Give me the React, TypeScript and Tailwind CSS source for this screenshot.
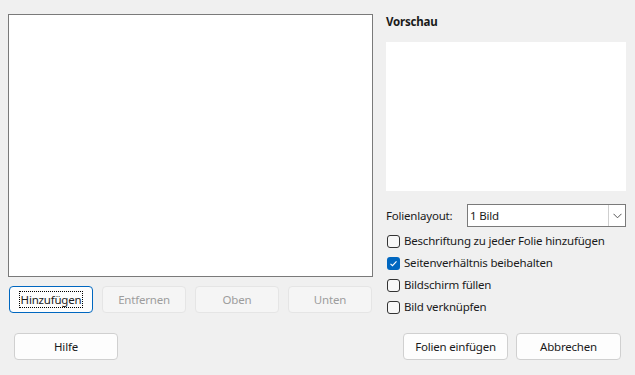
import React from "react";

const font = { fontFamily: '"Noto Sans", "Open Sans", sans-serif' };

function Btn({
  label,
  disabled,
  focused,
  className = "",
}: {
  label: string;
  disabled?: boolean;
  focused?: boolean;
  className?: string;
}) {
  return (
    <button
      className={`h-[27px] rounded-[4px] border text-[11.5px] tracking-[-0.2px] flex items-center justify-center ${
        focused
          ? "border-[#0067c0] bg-[#fdfdfd] text-[#1a1a1a]"
          : disabled
          ? "border-[#e5e5e5] bg-[#f5f5f5] text-[#9d9d9d]"
          : "border-[#d0d0d0] bg-[#fdfdfd] text-[#1a1a1a]"
      } ${className}`}
    >
      {focused ? (
        <span className="border border-dotted border-black leading-[15px] px-[1px]">{label}</span>
      ) : (
        label
      )}
    </button>
  );
}

function Check({ label, checked }: { label: string; checked?: boolean }) {
  return (
    <div className="flex items-center gap-[4px] h-[22px]">
      <span
        className={`w-[13px] h-[13px] rounded-[3px] flex items-center justify-center ${
          checked ? "bg-[#0067c0]" : "border border-[#333] bg-[#f7f7f7]"
        }`}
      >
        {checked && (
          <svg width="9" height="9" viewBox="0 0 9 9">
            <path d="M1.5 4.8 L3.5 6.7 L7.5 2.3" stroke="white" strokeWidth="1.1" fill="none" />
          </svg>
        )}
      </span>
      <span className="text-[11.5px] tracking-[-0.2px] text-[#1a1a1a]">{label}</span>
    </div>
  );
}

export default function App() {
  return (
    <div className="w-[635px] h-[375px] bg-[#f0f0f0] flex flex-col" style={font}>
      <div className="flex">
        {/* Left: picture list */}
        <div className="pl-2 pt-[14px] flex flex-col">
          <div className="w-[365px] h-[263px] bg-white border border-[#7a7a7a]" />
          <div className="flex gap-[9px] mt-[9px] ml-[1px]">
            <Btn label="Hinzufügen" focused className="w-[84px]" />
            <Btn label="Entfernen" disabled className="w-[84px]" />
            <Btn label="Oben" disabled className="w-[84px]" />
            <Btn label="Unten" disabled className="w-[84px]" />
          </div>
        </div>

        {/* Right: preview & options */}
        <div className="ml-[13px] pt-[14px] flex flex-col w-[240px]">
          <div className="text-[11.5px] tracking-[-0.2px] font-bold text-[#1a1a1a] h-[16px] leading-[16px]">
            Vorschau
          </div>
          <div className="mt-[12px] h-[149px] bg-white" />
          <div className="flex items-center mt-[13px] h-[23px]">
            <span className="text-[11.5px] tracking-[-0.2px] text-[#1a1a1a] w-[81px]">Folienlayout:</span>
            <div className="w-[159px] h-[23px] border border-[#7a7a7a] bg-white flex items-center justify-between">
              <span className="text-[11.5px] tracking-[-0.2px] text-[#1a1a1a] pl-[2px]">1 Bild</span>
              <span className="w-[17px] h-[21px] border-l border-[#cfcfcf] flex items-center justify-center">
                <svg width="9" height="6" viewBox="0 0 9 6">
                  <path d="M0.5 0.8 L4.5 4.8 L8.5 0.8" stroke="#555" strokeWidth="1" fill="none" />
                </svg>
              </span>
            </div>
          </div>
          <div className="flex flex-col mt-[3px] ml-[1px]">
            <Check label="Beschriftung zu jeder Folie hinzufügen" />
            <Check label="Seitenverhältnis beibehalten" checked />
            <Check label="Bildschirm füllen" />
            <Check label="Bild verknüpfen" />
          </div>
        </div>
      </div>

      {/* Bottom buttons */}
      <div className="flex items-center mt-auto mb-[15px] px-[14px]">
        <Btn label="Hilfe" className="w-[104px]" />
        <div className="ml-auto flex gap-[8px]">
          <Btn label="Folien einfügen" className="w-[105px]" />
          <Btn label="Abbrechen" className="w-[105px]" />
        </div>
      </div>
    </div>
  );
}
